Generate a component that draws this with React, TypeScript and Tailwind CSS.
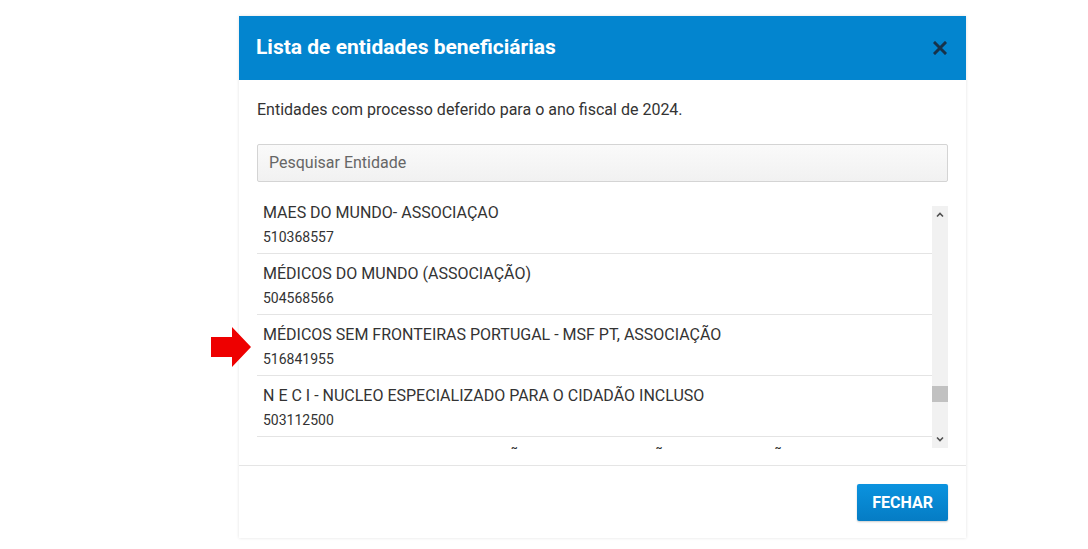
import React from 'react'

const entidades = [
  { nome: 'MAES DO MUNDO- ASSOCIAÇAO', nif: '510368557' },
  { nome: 'MÉDICOS DO MUNDO (ASSOCIAÇÃO)', nif: '504568566' },
  { nome: 'MÉDICOS SEM FRONTEIRAS PORTUGAL - MSF PT, ASSOCIAÇÃO', nif: '516841955' },
  { nome: 'N E C I - NUCLEO ESPECIALIZADO PARA O CIDADÃO INCLUSO', nif: '503112500' },
  { nome: 'OBRA SOCIAL DA PAZ - ASSOCIAÇÃO PARA INTEGRAÇÃO E A PROMOÇÃO SOCIAL', nif: '501234567' },
]

function RedArrow() {
  return (
    <svg width="42" height="42" viewBox="0 0 42 42" className="absolute left-[210px] top-[326px]">
      <path d="M1 11 H22 V1 L41 21 L22 41 V31 H1 Z" fill="#ee0000" />
    </svg>
  )
}

function FakeScrollbar() {
  return (
    <div className="w-[16px] pt-[6px] shrink-0">
      <div className="h-[242px] bg-[#f1f1f1] flex flex-col items-center justify-between relative">
        <svg width="10" height="16" viewBox="0 0 10 16" className="mt-[1px]">
          <path d="M2 9.5 L5 6.5 L8 9.5" fill="none" stroke="#505050" strokeWidth="1.6" />
        </svg>
        <div className="absolute left-0 top-[180px] w-[16px] h-[16px] bg-[#c1c1c1]" />
        <svg width="10" height="16" viewBox="0 0 10 16" className="mb-[1px]">
          <path d="M2 6.5 L5 9.5 L8 6.5" fill="none" stroke="#505050" strokeWidth="1.6" />
        </svg>
      </div>
    </div>
  )
}

export default function App() {
  return (
    <div className="relative w-[1088px] h-[549px] bg-white overflow-hidden font-['Roboto',sans-serif]">
      <div className="absolute left-[239px] top-[16px] w-[727px] bg-white shadow-[0_0_3px_rgba(0,0,0,0.12)]">
        {/* Header */}
        <div className="h-[64px] bg-[#0385cf] flex items-center justify-between pl-[17px] pr-[18px]">
          <h2 className="text-white text-[21px] font-bold">Lista de entidades beneficiárias</h2>
          <svg width="14" height="14" viewBox="0 0 14 14" className="mr-[1px]">
            <path d="M2 2 L12 12 M12 2 L2 12" stroke="#17324a" strokeWidth="3" strokeLinecap="square" />
          </svg>
        </div>

        {/* Body */}
        <div className="px-[18px] pt-[19px]">
          <p className="text-[16px] leading-[22px] text-[#333]">Entidades com processo deferido para o ano fiscal de 2024.</p>
          <div className="mt-[23px] h-[38px] border border-[#d4d4d4] rounded-[2px] bg-gradient-to-b from-[#fafafa] to-[#f1f1f1] flex items-center px-[11px]">
            <span className="text-[16px] text-[#666]">Pesquisar Entidade</span>
          </div>

          <div className="mt-[18px] flex h-[249px]">
            <div className="flex-1 overflow-hidden">
              <div className="-mt-[7px]">
                {entidades.map((e) => (
                  <div key={e.nif} className="border-b border-[#e4e4e4] pl-[6px] pt-[10px] pb-[6px]">
                    <div className="text-[16px] leading-[20px] text-[#333] whitespace-nowrap">{e.nome}</div>
                    <div className="mt-[4px] text-[14px] leading-[20px] text-[#333]">{e.nif}</div>
                  </div>
                ))}
              </div>
            </div>
            <FakeScrollbar />
          </div>
        </div>

        {/* Footer */}
        <div className="mt-[16px] border-t border-[#e5e5e5] flex justify-end px-[18px] pt-[18px] pb-[17px]">
          <button className="h-[37px] px-[15px] rounded-[2px] bg-gradient-to-b from-[#0b93df] to-[#057cc4] text-white text-[16px] font-bold shadow-[0_1px_2px_rgba(0,0,0,0.2)]">
            FECHAR
          </button>
        </div>
      </div>
      <RedArrow />
    </div>
  )
}
